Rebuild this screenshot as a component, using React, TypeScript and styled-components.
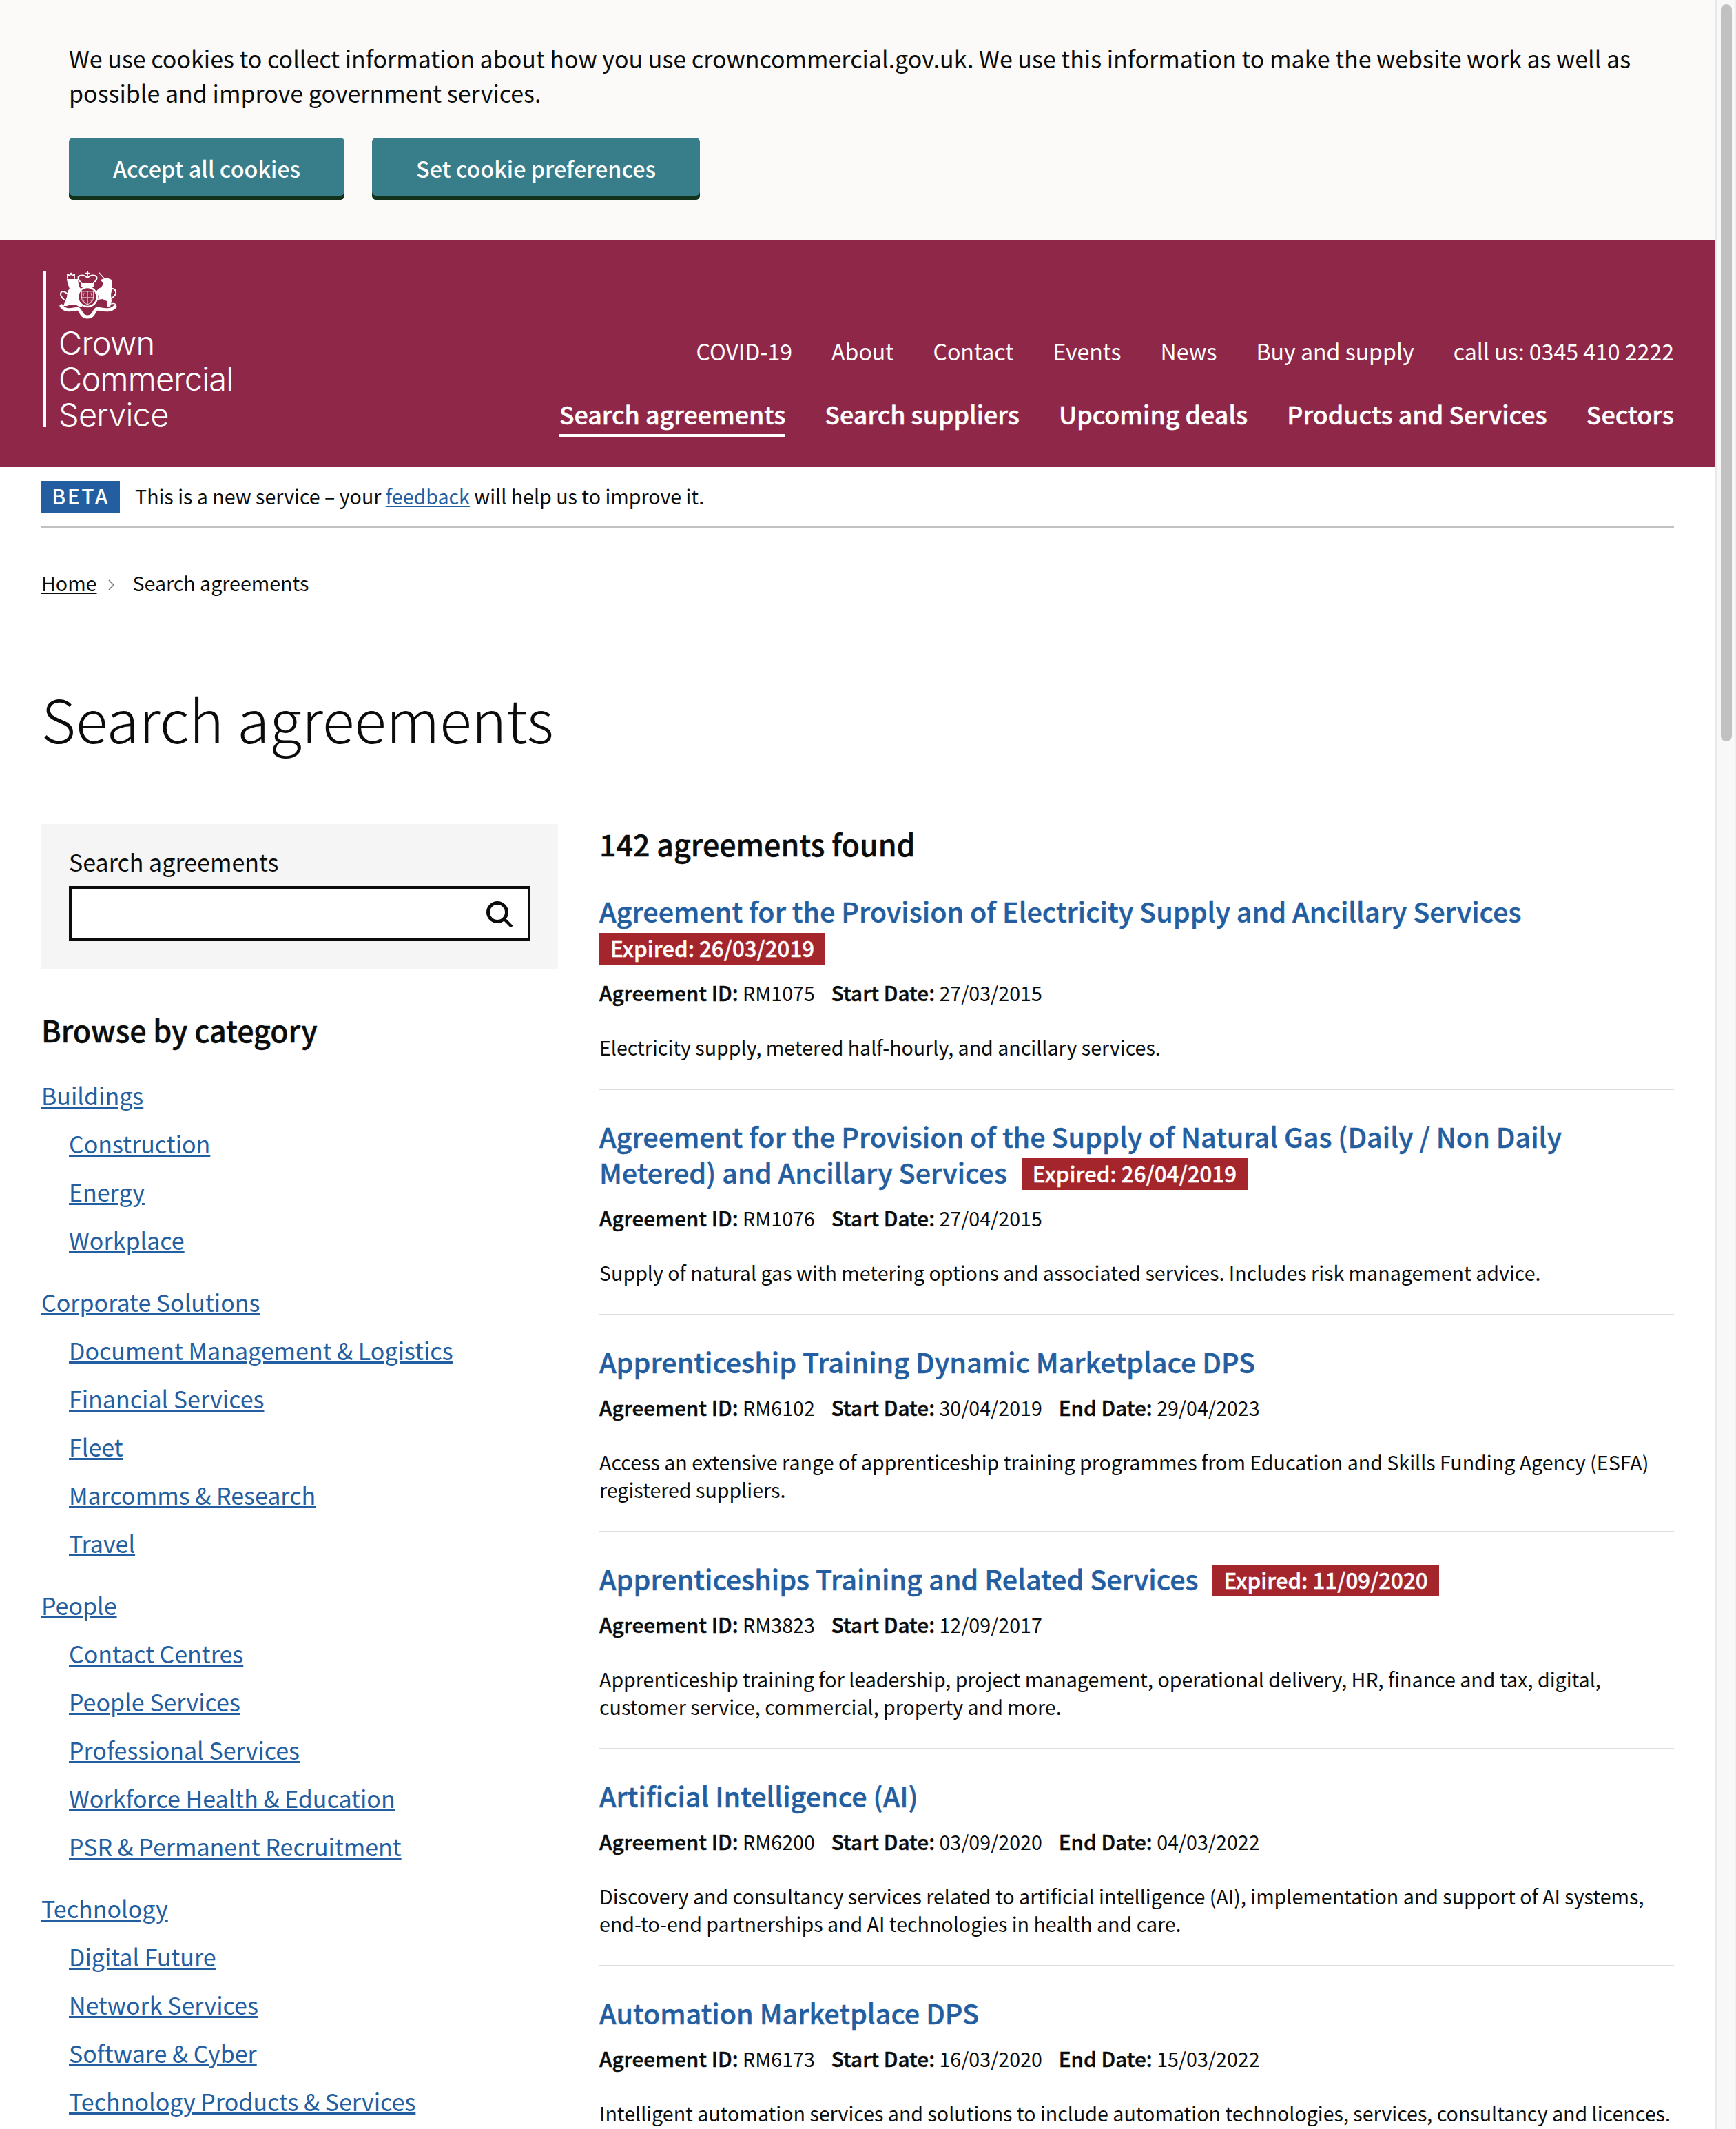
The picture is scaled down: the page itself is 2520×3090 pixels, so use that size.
import React from "react";
import styled, { createGlobalStyle, css } from "styled-components";

const Global = createGlobalStyle`
  html, body { margin: 0; padding: 0; background: #fff; }
  body { font-family: "Noto Sans CJK SC", "Noto Sans", sans-serif; color: #0b0c0c; }
  * { box-sizing: border-box; }
`;

const semibold = css`
  font-weight: 500;
  -webkit-text-stroke: 0.45px currentColor;
`;

const Viewport = styled.div`
  display: flex;
  width: 2520px;
  height: 3090px;
  overflow: hidden;
`;
const Page = styled.div`
  width: 2490px;
  flex: none;
`;
const ScrollTrack = styled.div`
  flex: none;
  width: 30px;
  height: 3090px;
  background: #f8f8f8;
  border-left: 2px solid #e8e8e8;
  border-right: 2px solid #efefef;
  padding: 6px 4px 0 6px;
`;
const ScrollThumb = styled.div`
  height: 1070px;
  border-radius: 8px;
  background: #c1c1c1;
`;

const Cookie = styled.section`
  background: #fbfaf8;
  height: 348px;
  padding: 60px 100px 0;
`;
const CookieText = styled.p`
  margin: 0;
  font-size: 34px;
  line-height: 50px;
`;
const CookieActions = styled.div`
  display: flex;
  gap: 40px;
  margin-top: 40px;
`;
const CookieButton = styled.button`
  height: 90px;
  padding: 0 64px 3px;
  border: 0;
  border-radius: 6px;
  background: #387d8a;
  box-shadow: inset 0 -6px 0 #13321c;
  color: #fff;
  font: 500 32.3px/44px "Noto Sans CJK SC", sans-serif;
`;

const Header = styled.header`
  display: flex;
  justify-content: space-between;
  height: 330px;
  padding: 45px 60px 0 63px;
  background: #8f2848;
  color: #fff;
`;
const Logo = styled.div`
  width: 300px;
  height: 227px;
  border-left: 4px solid #fff;
  padding-left: 18px;
`;
const Crest = styled.svg`
  display: block;
  width: 86px;
  height: 71px;
`;
const LogoText = styled.div`
  margin-top: 8px;
  font: 300 47px/52px Inter, "Liberation Sans", Arial, sans-serif;
  letter-spacing: -0.8px;
`;
const NavColumn = styled.nav`
  display: flex;
  flex-direction: column;
  align-items: flex-end;
  padding-top: 96px;
`;
const TopNav = styled.div`
  display: flex;
  gap: 57px;
  font-size: 32.1px;
  line-height: 40px;
`;
const MainNav = styled.div`
  display: flex;
  gap: 57px;
  margin-top: 49px;
  font-size: 35.82px;
  line-height: 44px;
  ${semibold}
`;
const MainLink = styled.span<{ $active?: boolean }>`
  padding-bottom: 8px;
  border-bottom: 4px solid ${(p) => (p.$active ? "#fff" : "transparent")};
`;

const Container = styled.main`
  padding: 0 60px;
`;
const BetaBar = styled.div`
  display: flex;
  align-items: center;
  gap: 22px;
  padding: 20px 0;
  border-bottom: 2px solid #bfc1c3;
  font-size: 28.6px;
  line-height: 42px;
`;
const BetaTag = styled.strong`
  width: 114px;
  height: 46px;
  text-align: center;
  background: #235ea0;
  color: #fff;
  font-size: 30px;
  font-weight: 500;
  letter-spacing: 2.5px;
`;
const BetaMessage = styled.span`
  padding-bottom: 2px;
`;
const Link = styled.a`
  color: #235ea0;
  text-decoration: underline;
`;
const Breadcrumb = styled.div`
  display: flex;
  align-items: center;
  margin-top: 60px;
  font-size: 28.6px;
  line-height: 40px;
`;
const HomeLink = styled.a`
  color: #0b0c0c;
  text-decoration: underline;
`;
const Chevron = styled.svg`
  width: 12px;
  height: 18px;
  margin: 6px 24px 0 16px;
`;
const Title = styled.h1`
  margin: 116px 0 0;
  font-size: 86px;
  font-weight: 300;
  line-height: 120px;
`;
const Columns = styled.div`
  display: grid;
  grid-template-columns: 750px 1560px;
  gap: 60px;
  margin-top: 94px;
`;
const SearchPanel = styled.div`
  height: 210px;
  padding: 33px 40px 0;
  background: #f5f5f5;
`;
const SearchLabel = styled.label`
  display: block;
  font-size: 34px;
  line-height: 44px;
`;
const SearchBox = styled.div`
  display: flex;
  align-items: center;
  justify-content: flex-end;
  height: 80px;
  margin-top: 13px;
  padding-right: 21px;
  background: #fff;
  border: 4px solid #0b0c0c;
`;
const SearchIcon = styled.svg`
  width: 40px;
  height: 40px;
`;
const BrowseTitle = styled.h2`
  margin: 58px 0 0;
  font-size: 43px;
  line-height: 60px;
  ${semibold}
`;
const CategoryList = styled.ul`
  margin: 41px 0 0;
  padding: 0;
  list-style: none;
`;
const CategoryItem = styled.li`
  margin-bottom: 40px;
  font-size: 34px;
  line-height: 50px;
`;
const SubList = styled.ul`
  margin: 20px 0 0;
  padding: 0 0 0 40px;
  list-style: none;
  display: flex;
  flex-direction: column;
  gap: 20px;
`;
const ResultsTitle = styled.h2`
  margin: -2px 0 42px;
  font-size: 43px;
  line-height: 60px;
  ${semibold}
`;
const Agreement = styled.article`
  margin-bottom: 41px;
  padding-bottom: 40px;
  border-bottom: 2px solid #dedede;
`;
const AgreementTitle = styled.h3`
  margin: 0;
  font-size: 39.6px;
  line-height: 52px;
  ${semibold}
`;
const TitleLink = styled.a`
  margin-right: 12px;
  color: #235ea0;
`;
const ExpiredTag = styled.span`
  display: inline-block;
  height: 46px;
  padding: 0 16px;
  background: #a4262c;
  color: #fff;
  font-size: 31.3px;
  line-height: 44px;
  vertical-align: 2px;
`;
const Meta = styled.p`
  margin: 21px 0 0;
  font-size: 28.6px;
  line-height: 40px;
  display: flex;
  gap: 24px;
`;
const MetaLabel = styled.b`
  font-size: 29.7px;
  line-height: 0;
  ${semibold}
`;
const Description = styled.p`
  margin: 39px 0 0;
  font-size: 28.6px;
  line-height: 40px;
`;

const topLinks = ["COVID-19", "About", "Contact", "Events", "News", "Buy and supply", "call us: 0345 410 2222"];
const mainLinks = ["Search agreements", "Search suppliers", "Upcoming deals", "Products and Services", "Sectors"];

const categories = [
  { name: "Buildings", subs: ["Construction", "Energy", "Workplace"] },
  { name: "Corporate Solutions", subs: ["Document Management & Logistics", "Financial Services", "Fleet", "Marcomms & Research", "Travel"] },
  { name: "People", subs: ["Contact Centres", "People Services", "Professional Services", "Workforce Health & Education", "PSR & Permanent Recruitment"] },
  { name: "Technology", subs: ["Digital Future", "Network Services", "Software & Cyber", "Technology Products & Services"] },
];

const agreements = [
  { title: "Agreement for the Provision of Electricity Supply and Ancillary Services", expired: "26/03/2019", id: "RM1075", start: "27/03/2015", desc: "Electricity supply, metered half-hourly, and ancillary services." },
  { title: "Agreement for the Provision of the Supply of Natural Gas (Daily / Non Daily Metered) and Ancillary Services", expired: "26/04/2019", id: "RM1076", start: "27/04/2015", desc: "Supply of natural gas with metering options and associated services. Includes risk management advice." },
  { title: "Apprenticeship Training Dynamic Marketplace DPS", id: "RM6102", start: "30/04/2019", end: "29/04/2023", desc: "Access an extensive range of apprenticeship training programmes from Education and Skills Funding Agency (ESFA) registered suppliers." },
  { title: "Apprenticeships Training and Related Services", expired: "11/09/2020", id: "RM3823", start: "12/09/2017", desc: "Apprenticeship training for leadership, project management, operational delivery, HR, finance and tax, digital, customer service, commercial, property and more." },
  { title: "Artificial Intelligence (AI)", id: "RM6200", start: "03/09/2020", end: "04/03/2022", desc: "Discovery and consultancy services related to artificial intelligence (AI), implementation and support of AI systems, end-to-end partnerships and AI technologies in health and care." },
  { title: "Automation Marketplace DPS", id: "RM6173", start: "16/03/2020", end: "15/03/2022", desc: "Intelligent automation services and solutions to include automation technologies, services, consultancy and licences." },
];

function CrestMark() {
  return (
    <Crest viewBox="0 0 86 71" aria-hidden="true">
      <g fill="none" stroke="#fff" strokeLinecap="round" strokeLinejoin="round">
        {/* royal crown arches */}
        <path d="M42 1v5" strokeWidth="2" />
        <path d="M33 17c-5-3-6-9-2-10 4-1 8 0 11 3 3-3 7-4 11-3 4 1 3 7-2 10" strokeWidth="2" />
        <path d="M39.500 3.500h5" strokeWidth="1.500" />
        {/* ribbon */}
        <path d="M4 51c6 9 16 5 24 4 5 2 4 12 14 12s9-10 14-12c8 1 18 5 26-3" strokeWidth="5" />
        {/* supporter tails and curls */}
        <path d="M12 33c-4-4-9-4-9 1 0 3 3 6 5 8" strokeWidth="2" />
        <path d="M76 26c4-1 8 2 7 7-1 4-4 5-6 7" strokeWidth="2" />
        <path d="M74 49c3-2 8-2 9 0s-2 5-5 4" strokeWidth="1.500" />
        {/* lion's crown */}
        <path d="M13 11V5l3 2 2-3.500 2 3.500 3-2v6" strokeWidth="1.800" />
        {/* unicorn's horn */}
        <path d="M59 3l8 9" strokeWidth="1.300" />
        {/* garter and shield */}
        <circle cx="42" cy="38" r="14" strokeWidth="2.600" />
        <path d="M33.500 30h17v9c0 5-4 8-8.500 10-4.500-2-8.500-5-8.500-10z" strokeWidth="1.200" strokeOpacity=".7" />
        <path d="M42 30v19M33.500 39h17" strokeWidth="1.400" strokeOpacity=".7" />
        <path d="M37 32l-1 5M47 32l1 5M37 42l-.5 4M47 42l.5 4" strokeWidth="1.100" strokeOpacity=".55" />
      </g>
      <g fill="#fff">
        {/* crown band */}
        <path d="M32 18h20v5H32z" />
        {/* lion */}
        <path d="M12 12h16l1.500 11 4.500 5-5 4-2 4 3 8 6 6-4 3-8-4-6 0-6 2-5 0 3-8 2-5 1-8 3-4-3-8z" />
        {/* unicorn */}
        <path d="M61 13l9-3 7 3 1 13-2 8 1 10-2 8h-4l-1-8-6-3-7 1 1-6-5-4 5-6 4-2 3-5z" />
      </g>
    </Crest>
  );
}

export default function App() {
  return (
    <Viewport>
      <Global />
      <Page>
        <Cookie>
          <CookieText>
            We use cookies to collect information about how you use crowncommercial.gov.uk. We use this information to make the website work as well as possible and improve government services.
          </CookieText>
          <CookieActions>
            <CookieButton>Accept all cookies</CookieButton>
            <CookieButton>Set cookie preferences</CookieButton>
          </CookieActions>
        </Cookie>
        <Header>
          <Logo>
            <CrestMark />
            <LogoText>
              Crown
              <br />
              Commercial
              <br />
              Service
            </LogoText>
          </Logo>
          <NavColumn>
            <TopNav>
              {topLinks.map((l) => (
                <span key={l}>{l}</span>
              ))}
            </TopNav>
            <MainNav>
              {mainLinks.map((l, i) => (
                <MainLink key={l} $active={i === 0}>
                  {l}
                </MainLink>
              ))}
            </MainNav>
          </NavColumn>
        </Header>
        <Container>
          <BetaBar>
            <BetaTag>BETA</BetaTag>
            <BetaMessage>
              This is a new service – your <Link>feedback</Link> will help us to improve it.
            </BetaMessage>
          </BetaBar>
          <Breadcrumb>
            <HomeLink>Home</HomeLink>
            <Chevron viewBox="0 0 12 18" aria-hidden="true">
              <path d="M2 2l7 7-7 7" fill="none" stroke="#75787b" strokeWidth="1.500" />
            </Chevron>
            <span>Search agreements</span>
          </Breadcrumb>
          <Title>Search agreements</Title>
          <Columns>
            <aside>
              <SearchPanel>
                <SearchLabel>Search agreements</SearchLabel>
                <SearchBox>
                  <SearchIcon viewBox="0 0 40 40" aria-hidden="true">
                    <circle cx="17" cy="18" r="13.500" fill="none" stroke="#0b0c0c" strokeWidth="5" />
                    <path d="M27 28l11 11" stroke="#0b0c0c" strokeWidth="4.500" />
                  </SearchIcon>
                </SearchBox>
              </SearchPanel>
              <BrowseTitle>Browse by category</BrowseTitle>
              <CategoryList>
                {categories.map((c) => (
                  <CategoryItem key={c.name}>
                    <Link>{c.name}</Link>
                    <SubList>
                      {c.subs.map((s) => (
                        <li key={s}>
                          <Link>{s}</Link>
                        </li>
                      ))}
                    </SubList>
                  </CategoryItem>
                ))}
              </CategoryList>
            </aside>
            <section>
              <ResultsTitle>142 agreements found</ResultsTitle>
              {agreements.map((a) => (
                <Agreement key={a.id}>
                  <AgreementTitle>
                    <TitleLink>{a.title}</TitleLink> {a.expired && <ExpiredTag>Expired: {a.expired}</ExpiredTag>}
                  </AgreementTitle>
                  <Meta>
                    <span>
                      <MetaLabel>Agreement ID:</MetaLabel> {a.id}
                    </span>
                    <span>
                      <MetaLabel>Start Date:</MetaLabel> {a.start}
                    </span>
                    {a.end && (
                      <span>
                        <MetaLabel>End Date:</MetaLabel> {a.end}
                      </span>
                    )}
                  </Meta>
                  <Description>{a.desc}</Description>
                </Agreement>
              ))}
            </section>
          </Columns>
        </Container>
      </Page>
      <ScrollTrack>
        <ScrollThumb />
      </ScrollTrack>
    </Viewport>
  );
}
